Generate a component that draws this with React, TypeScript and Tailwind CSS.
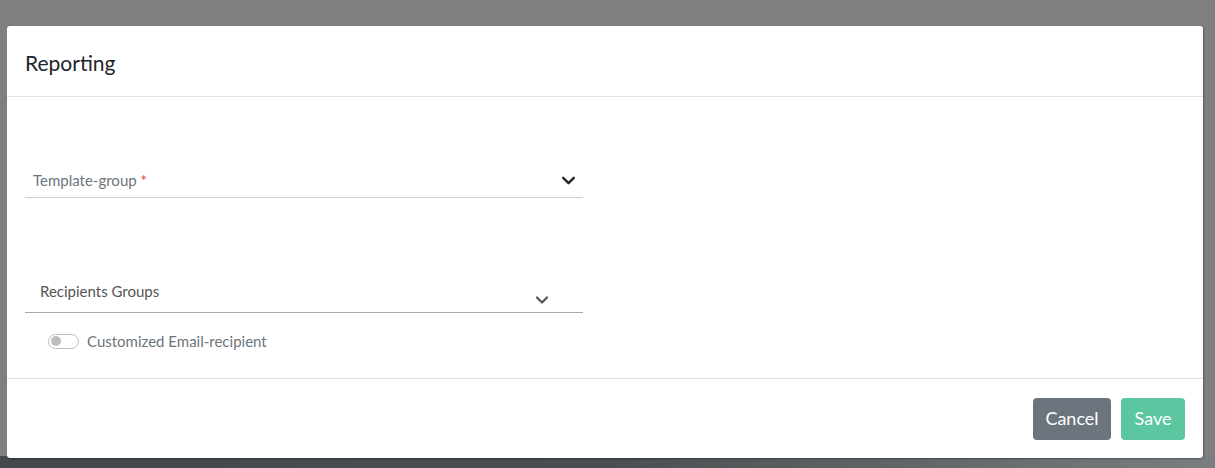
import React from "react";

const Chevron = ({ className }: { className?: string }) => (
  <svg viewBox="0 0 16 16" className={className} fill="none" stroke="currentColor" strokeWidth={2.2} strokeLinecap="round" strokeLinejoin="round">
    <path d="M3 5.5l5 5 5-5" />
  </svg>
);

export default function App() {
  return (
    <div className="relative h-[468px] w-[1215px] overflow-hidden bg-[#7f7f7f] font-['Lato',sans-serif]">
      <div className="absolute bottom-0 left-0 h-[12px] w-full bg-gradient-to-r from-[#44484c] via-[#4a4e52] to-[#7b7e80]" />
      <div className="relative ml-[7px] mt-[26px] flex h-[432px] w-[1196px] flex-col rounded-[3px] bg-white shadow-[1px_1px_2px_rgba(0,0,0,0.3)]">
        <div className="flex h-[71px] items-center border-b border-[#dee2e6] px-[18px] pt-[3px]">
          <h2 className="text-[21px] text-[#212529]">Reporting</h2>
        </div>

        <div className="flex-1 px-[18px]">
          <div className="mt-[66px] flex h-[35px] w-[558px] items-center justify-between border-b border-[#cfcfcf] pl-[8px] pr-[6px]">
            <span className="text-[15px] text-[#6c757d]">
              Template-group <span className="text-[#e53935]">*</span>
            </span>
            <Chevron className="h-[17px] w-[17px] text-[#212529]" />
          </div>

          <div className="mt-[78px] flex h-[37px] w-[558px] justify-between border-b border-[#a8a8a8] pl-[15px] pr-[33px] pt-[4px]">
            <span className="text-[15px] text-[#555]">Recipients Groups</span>
            <Chevron className="mt-[12px] h-[16px] w-[16px] text-[#555]" />
          </div>

          <div className="mt-[17px] flex items-center gap-[8px] pl-[23px]">
            <div className="flex h-[15px] w-[31px] items-center rounded-full border border-[#bdbdbd] px-[2px]">
              <div className="h-[10px] w-[10px] rounded-full bg-[#bdbdbd]" />
            </div>
            <span className="text-[15px] text-[#6c757d]">Customized Email-recipient</span>
          </div>
        </div>

        <div className="flex h-[80px] items-center justify-end gap-[10px] border-t border-[#dee2e6] pr-[18px]">
          <button className="h-[42px] w-[78px] rounded-[4px] bg-[#6c757d] text-[18px] text-white">Cancel</button>
          <button className="h-[42px] w-[64px] rounded-[4px] bg-[#5cc6a0] text-[18px] text-white">Save</button>
        </div>
      </div>
    </div>
  );
}
